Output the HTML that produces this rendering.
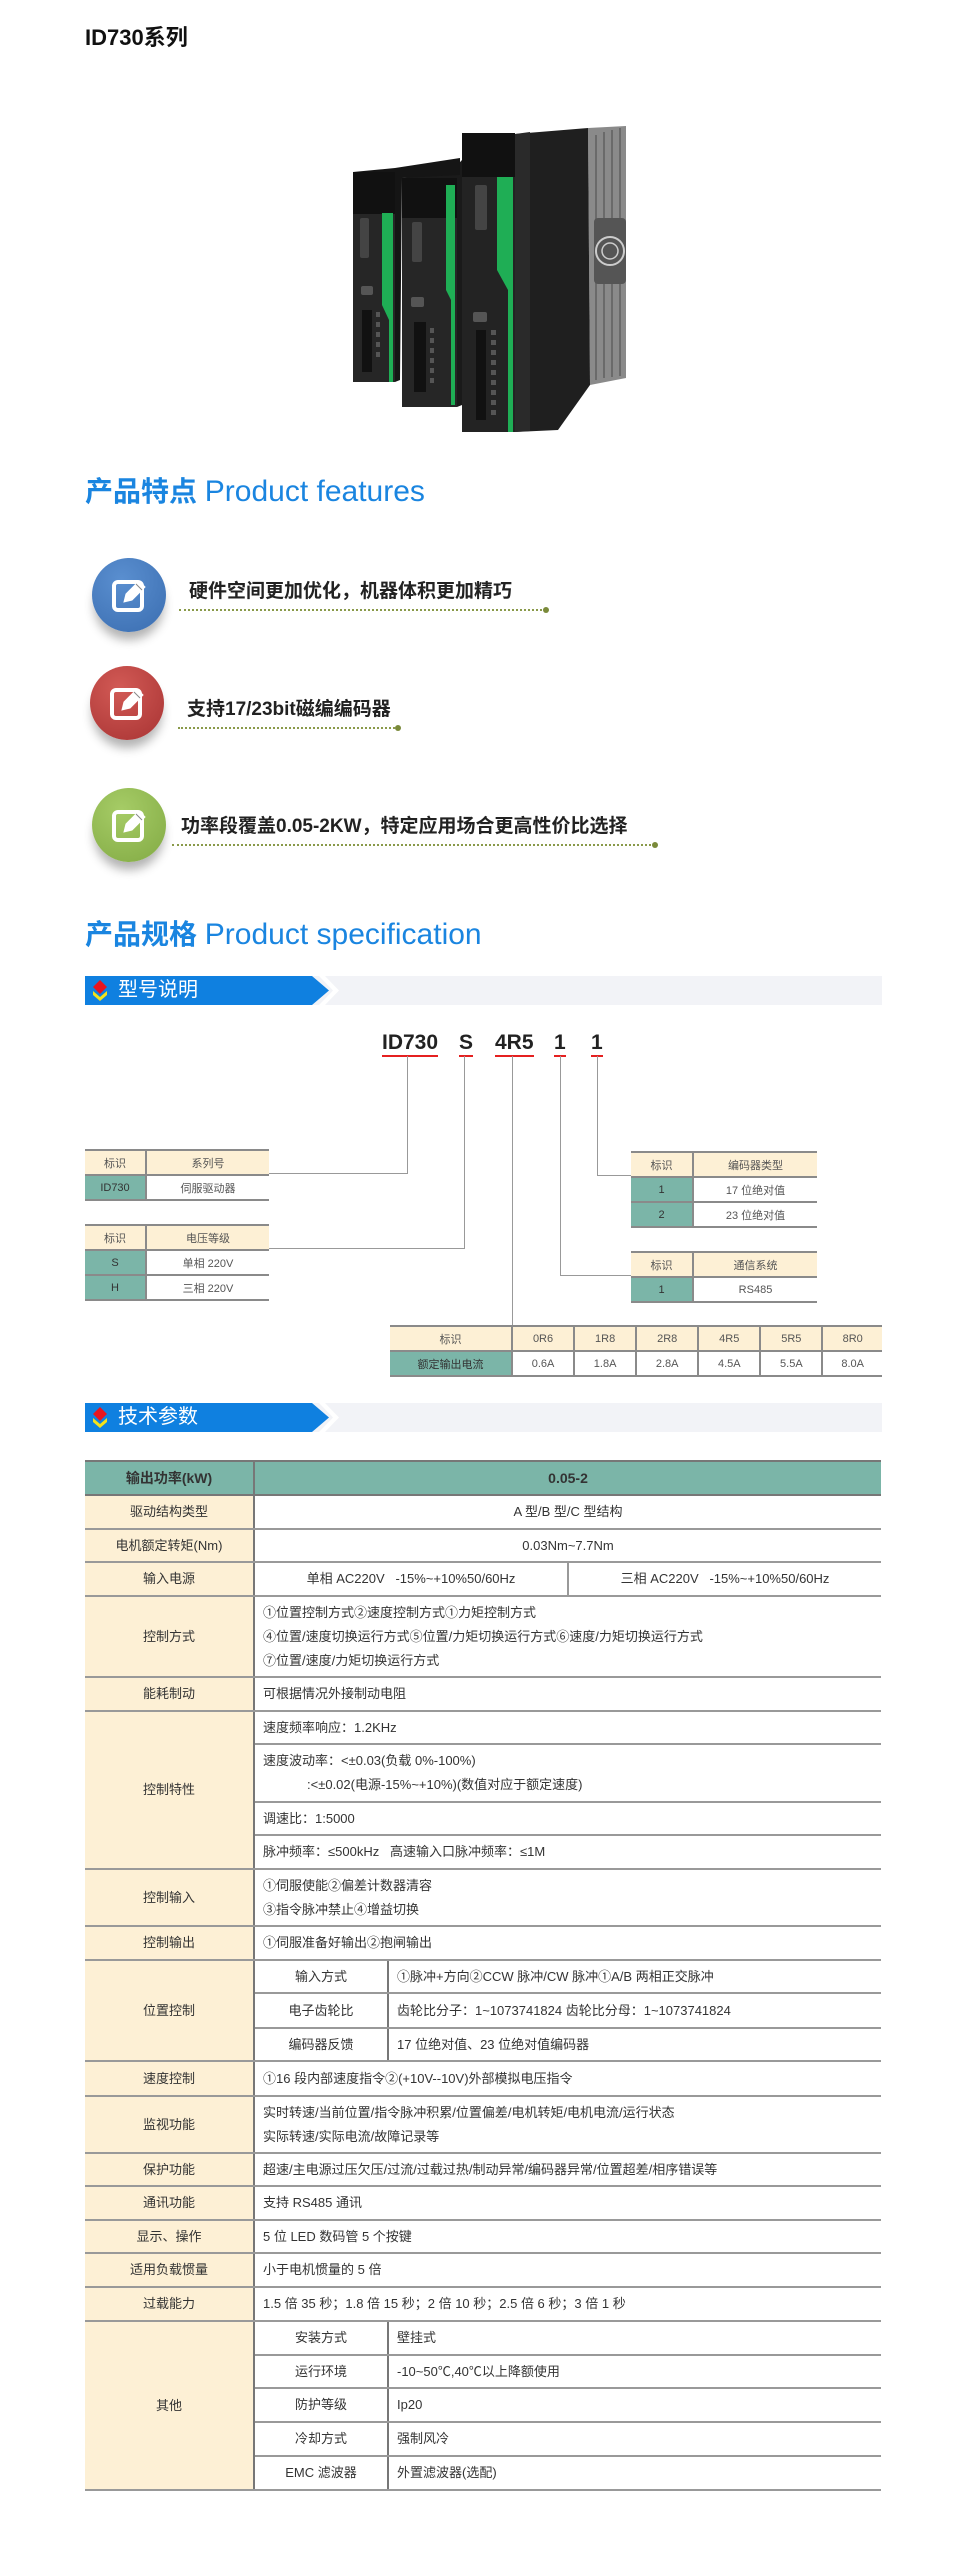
<!DOCTYPE html>
<html><head><meta charset="utf-8">
<style>
*{margin:0;padding:0;box-sizing:border-box}
body{width:960px;height:2556px;background:#fff;position:relative;font-family:"Liberation Sans","Noto Sans CJK SC",sans-serif;color:#333;overflow:hidden}
.a{position:absolute}
.h1{font-size:28px;color:#1a85e0;white-space:nowrap;line-height:1}
.h1 b{font-weight:bold}
.h1 span{font-size:30px}
.feat{font-size:19px;font-weight:bold;color:#222;white-space:nowrap;line-height:1}
.dot{border-top:2px dotted #8a9a4a;height:0}
.dot:after{content:"";position:absolute;right:-3px;top:-4px;width:6px;height:6px;border-radius:50%;background:#7a8a3a}
.circ{width:74px;height:74px;border-radius:50%;box-shadow:0 10px 10px -2px rgba(0,0,0,.3)}
.banner{left:85px;width:797px;height:29px;background:#f2f3f7}
.banner .blue{position:absolute;left:0;top:0;width:244px;height:29px;background:#0f80e0;clip-path:polygon(0 0,227px 0,244px 14.5px,227px 29px,0 29px)}
.banner .t{position:absolute;left:33px;top:3px;color:#fff;font-size:20px;line-height:23px}
.mt{border-collapse:collapse;font-size:11px;color:#555;text-align:center}
.mt td{height:25px;border-bottom:2px solid #8a8a8a;padding:0}
.mt tr:first-child td{border-top:2px solid #8a8a8a;background:#fdf0d5}
.mt td.k{background:#7bb5a8;color:#333}
.mt td+td{border-left:2px solid #8a8a8a}
.ln{background:#999}
.code{font-size:21px;font-weight:bold;color:#222;line-height:1;border-bottom:2px solid #e52020;padding-bottom:2px}
table.sp{position:absolute;left:85px;top:1460px;width:796px;border-collapse:collapse;font-size:13px;color:#333;table-layout:fixed}
.sp td{border-bottom:2px solid #999;padding:0 0 0 8px;line-height:24px;vertical-align:middle}
.sp td.l{background:#fdf0d5;text-align:center;padding:0;border-right:2px solid #777}
.sp td.c{text-align:center;padding:0}
.sp td.s{text-align:center;padding:0;border-right:2px solid #777}
.sp tr.hd td{background:#7bb5a8;font-weight:bold;border-top:2px solid #777;border-bottom:2px solid #777;font-size:14px}
</style></head><body>

<div class="a" style="left:85px;top:27px;font-size:22px;font-weight:bold;color:#111;line-height:1">ID730系列</div>

<svg class="a" style="left:350px;top:120px" width="280" height="320" viewBox="350 120 280 320">
 <path d="M588 128 L626 126 L626 378 L590 385 Z" fill="#8a8a8a"/>
 <g stroke="#6a6a6a" stroke-width="2"><line x1="596" y1="135" x2="596" y2="380"/><line x1="604" y1="132" x2="604" y2="378"/><line x1="612" y1="130" x2="612" y2="377"/><line x1="620" y1="128" x2="620" y2="376"/></g>
 <rect x="594" y="218" width="32" height="66" rx="4" fill="#555"/>
 <circle cx="610" cy="251" r="14" fill="none" stroke="#ccc" stroke-width="2"/><circle cx="610" cy="251" r="8" fill="none" stroke="#ccc" stroke-width="1.5"/>
 <path d="M515 134 L588 128 L590 385 L558 430 L515 432 Z" fill="#1f1f1f"/>
 <path d="M515 134 L530 132 L530 431 L515 432 Z" fill="#2a2a2a"/>
 <rect x="462" y="133" width="53" height="299" fill="#232323"/>
 <rect x="462" y="133" width="53" height="44" fill="#111"/>
 <path d="M497 177 L513 177 L513 432 L508 432 L508 290 L497 270 Z" fill="#1fae55"/>
 <rect x="475" y="185" width="12" height="45" rx="2" fill="#444"/>
 <rect x="473" y="312" width="14" height="10" rx="2" fill="#555"/>
 <g fill="#555"><rect x="491" y="330" width="5" height="5"/><rect x="491" y="340" width="5" height="5"/><rect x="491" y="350" width="5" height="5"/><rect x="491" y="360" width="5" height="5"/><rect x="491" y="370" width="5" height="5"/><rect x="491" y="380" width="5" height="5"/><rect x="491" y="390" width="5" height="5"/><rect x="491" y="400" width="5" height="5"/><rect x="491" y="410" width="5" height="5"/></g>
 <rect x="476" y="330" width="10" height="90" fill="#111"/>
 <path d="M402 178 L450 173 L462 160 L462 405 L457 407 Z" fill="#1a1a1a"/>
 <rect x="402" y="178" width="55" height="229" fill="#262626"/>
 <rect x="402" y="178" width="55" height="40" fill="#111"/>
 <path d="M446 185 L455 185 L455 405 L451 405 L451 300 L446 290 Z" fill="#1fae55"/>
 <rect x="412" y="222" width="10" height="40" rx="2" fill="#444"/>
 <rect x="411" y="297" width="13" height="10" rx="2" fill="#555"/>
 <rect x="414" y="322" width="12" height="70" fill="#111"/>
 <g fill="#555"><rect x="430" y="328" width="4" height="5"/><rect x="430" y="338" width="4" height="5"/><rect x="430" y="348" width="4" height="5"/><rect x="430" y="358" width="4" height="5"/><rect x="430" y="368" width="4" height="5"/><rect x="430" y="378" width="4" height="5"/></g>
 <path d="M353 172 L395 168 L460 158 L460 175 L402 178 L400 380 L395 382 Z" fill="#151515"/>
 <rect x="353" y="172" width="42" height="210" fill="#262626"/>
 <rect x="353" y="172" width="42" height="42" fill="#111"/>
 <path d="M382 213 L393 213 L393 382 L389 382 L389 320 L382 305 Z" fill="#1fae55"/>
 <rect x="360" y="218" width="9" height="40" rx="2" fill="#444"/>
 <rect x="361" y="286" width="12" height="9" rx="2" fill="#555"/>
 <rect x="362" y="310" width="10" height="62" fill="#111"/>
 <g fill="#555"><rect x="376" y="312" width="4" height="5"/><rect x="376" y="322" width="4" height="5"/><rect x="376" y="332" width="4" height="5"/><rect x="376" y="342" width="4" height="5"/><rect x="376" y="352" width="4" height="5"/></g>
</svg>

<div class="a h1" style="left:85px;top:477px"><b>产品特点</b> <span>Product features</span></div>

<svg width="0" height="0" style="position:absolute"><defs>
<g id="ic"><rect x="-15" y="-13" width="28" height="28" rx="4" fill="none" stroke="#fff" stroke-width="4"/><path d="M-5 7 L-3 -1 L10 -14 L16 -8 L3 5 Z" fill="#fff" stroke="#fff" stroke-width="1"/><path d="M7 -11 L13 -5" stroke="#888" stroke-width="1"/></g>
</defs></svg>

<div class="a circ" style="left:92px;top:558px;background:radial-gradient(circle at 40% 30%,#5a8fd0,#3a6db0)"></div>
<svg class="a" style="left:92px;top:558px" width="74" height="74" viewBox="-37 -37 74 74"><use href="#ic"/></svg>
<div class="a feat" style="left:189px;top:582px">硬件空间更加优化，机器体积更加精巧</div>
<div class="a dot" style="left:179px;top:609px;width:367px"></div>

<div class="a circ" style="left:90px;top:666px;background:radial-gradient(circle at 40% 30%,#d25a55,#a83333)"></div>
<svg class="a" style="left:90px;top:666px" width="74" height="74" viewBox="-37 -37 74 74"><use href="#ic"/></svg>
<div class="a feat" style="left:187px;top:700px">支持17/23bit磁编编码器</div>
<div class="a dot" style="left:178px;top:727px;width:220px"></div>

<div class="a circ" style="left:92px;top:788px;background:radial-gradient(circle at 40% 30%,#a6cc66,#82aa44)"></div>
<svg class="a" style="left:92px;top:788px" width="74" height="74" viewBox="-37 -37 74 74"><use href="#ic"/></svg>
<div class="a feat" style="left:181px;top:817px">功率段覆盖0.05-2KW，特定应用场合更高性价比选择</div>
<div class="a dot" style="left:172px;top:844px;width:483px"></div>

<div class="a h1" style="left:85px;top:920px"><b>产品规格</b> <span>Product specification</span></div>

<div class="a banner" style="top:976px">
 <svg class="a" style="left:226px;top:0" width="40" height="29"><path d="M8 0 L22 14.5 L8 29 L14 29 L28 14.5 L14 0Z" fill="#fff"/></svg>
 <div class="blue"></div>
 <svg class="a" style="left:6px;top:4px" width="18" height="22"><path d="M9 0 L16 7 L9 14 L2 7Z" fill="#e8141e"/><path d="M2 11 L9 17 L16 11 L16 15 L9 21 L2 15Z" fill="#f5e21a"/></svg>
 <div class="t">型号说明</div>
</div>

<div class="a code" style="left:382px;top:1032px">ID730</div>
<div class="a code" style="left:459px;top:1032px">S</div>
<div class="a code" style="left:495px;top:1032px">4R5</div>
<div class="a code" style="left:554px;top:1032px">1</div>
<div class="a code" style="left:591px;top:1032px">1</div>

<div class="a ln" style="left:407px;top:1056px;width:1px;height:118px"></div>
<div class="a ln" style="left:269px;top:1173px;width:139px;height:1px"></div>
<div class="a ln" style="left:464px;top:1056px;width:1px;height:193px"></div>
<div class="a ln" style="left:269px;top:1248px;width:196px;height:1px"></div>
<div class="a ln" style="left:512px;top:1056px;width:1px;height:270px"></div>
<div class="a ln" style="left:560px;top:1056px;width:1px;height:220px"></div>
<div class="a ln" style="left:560px;top:1275px;width:72px;height:1px"></div>
<div class="a ln" style="left:597px;top:1056px;width:1px;height:120px"></div>
<div class="a ln" style="left:597px;top:1175px;width:35px;height:1px"></div>

<table class="a mt" style="left:85px;top:1149px;width:184px"><col style="width:61px"><col>
<tr><td>标识</td><td>系列号</td></tr><tr><td class="k">ID730</td><td>伺服驱动器</td></tr></table>
<table class="a mt" style="left:85px;top:1224px;width:184px"><col style="width:61px"><col>
<tr><td>标识</td><td>电压等级</td></tr><tr><td class="k">S</td><td>单相 220V</td></tr><tr><td class="k">H</td><td>三相 220V</td></tr></table>
<table class="a mt" style="left:631px;top:1151px;width:186px"><col style="width:62px"><col>
<tr><td>标识</td><td>编码器类型</td></tr><tr><td class="k">1</td><td>17 位绝对值</td></tr><tr><td class="k">2</td><td>23 位绝对值</td></tr></table>
<table class="a mt" style="left:631px;top:1251px;width:186px"><col style="width:62px"><col>
<tr><td>标识</td><td>通信系统</td></tr><tr><td class="k">1</td><td>RS485</td></tr></table>
<table class="a mt" style="left:390px;top:1325px;width:492px"><col style="width:122px"><col><col><col><col><col><col>
<tr><td>标识</td><td>0R6</td><td>1R8</td><td>2R8</td><td>4R5</td><td>5R5</td><td>8R0</td></tr>
<tr><td class="k">额定输出电流</td><td>0.6A</td><td>1.8A</td><td>2.8A</td><td>4.5A</td><td>5.5A</td><td>8.0A</td></tr></table>

<div class="a banner" style="top:1403px">
 <svg class="a" style="left:226px;top:0" width="40" height="29"><path d="M8 0 L22 14.5 L8 29 L14 29 L28 14.5 L14 0Z" fill="#fff"/></svg>
 <div class="blue"></div>
 <svg class="a" style="left:6px;top:4px" width="18" height="22"><path d="M9 0 L16 7 L9 14 L2 7Z" fill="#e8141e"/><path d="M2 11 L9 17 L16 11 L16 15 L9 21 L2 15Z" fill="#f5e21a"/></svg>
 <div class="t">技术参数</div>
</div>

<table class="sp">
<col style="width:169px"><col style="width:134px"><col style="width:180px"><col style="width:313px">
<tr class="hd" style="height:34px"><td class="l" style="background:#7bb5a8">输出功率(kW)</td><td colspan="3" class="c">0.05-2</td></tr>
<tr style="height:34px"><td class="l">驱动结构类型</td><td colspan="3" class="c">A 型/B 型/C 型结构</td></tr>
<tr style="height:33px"><td class="l">电机额定转矩(Nm)</td><td colspan="3" class="c">0.03Nm~7.7Nm</td></tr>
<tr style="height:34px"><td class="l">输入电源</td><td colspan="2" class="c" style="border-right:2px solid #999">单相 AC220V &nbsp; -15%~+10%50/60Hz</td><td class="c">三相 AC220V &nbsp; -15%~+10%50/60Hz</td></tr>
<tr style="height:81px"><td class="l">控制方式</td><td colspan="3">①位置控制方式②速度控制方式①力矩控制方式<br>④位置/速度切换运行方式⑤位置/力矩切换运行方式⑥速度/力矩切换运行方式<br>⑦位置/速度/力矩切换运行方式</td></tr>
<tr style="height:34px"><td class="l">能耗制动</td><td colspan="3">可根据情况外接制动电阻</td></tr>
<tr style="height:33px"><td class="l" rowspan="4">控制特性</td><td colspan="3">速度频率响应：1.2KHz</td></tr>
<tr style="height:58px"><td colspan="3">速度波动率：&lt;±0.03(负载 0%-100%)<br><span style="padding-left:44px">:&lt;±0.02(电源-15%~+10%)(数值对应于额定速度)</span></td></tr>
<tr style="height:33px"><td colspan="3">调速比：1:5000</td></tr>
<tr style="height:34px"><td colspan="3">脉冲频率：≤500kHz &nbsp; 高速输入口脉冲频率：≤1M</td></tr>
<tr style="height:57px"><td class="l">控制输入</td><td colspan="3">①伺服使能②偏差计数器清容<br>③指令脉冲禁止④增益切换</td></tr>
<tr style="height:34px"><td class="l">控制输出</td><td colspan="3">①伺服准备好输出②抱闸输出</td></tr>
<tr style="height:33px"><td class="l" rowspan="3">位置控制</td><td class="s">输入方式</td><td colspan="2">①脉冲+方向②CCW 脉冲/CW 脉冲①A/B 两相正交脉冲</td></tr>
<tr style="height:35px"><td class="s">电子齿轮比</td><td colspan="2">齿轮比分子：1~1073741824 齿轮比分母：1~1073741824</td></tr>
<tr style="height:33px"><td class="s">编码器反馈</td><td colspan="2">17 位绝对值、23 位绝对值编码器</td></tr>
<tr style="height:35px"><td class="l">速度控制</td><td colspan="3">①16 段内部速度指令②(+10V--10V)外部模拟电压指令</td></tr>
<tr style="height:57px"><td class="l">监视功能</td><td colspan="3">实时转速/当前位置/指令脉冲积累/位置偏差/电机转矩/电机电流/运行状态<br>实际转速/实际电流/故障记录等</td></tr>
<tr style="height:33px"><td class="l">保护功能</td><td colspan="3">超速/主电源过压欠压/过流/过载过热/制动异常/编码器异常/位置超差/相序错误等</td></tr>
<tr style="height:34px"><td class="l">通讯功能</td><td colspan="3">支持 RS485 通讯</td></tr>
<tr style="height:33px"><td class="l">显示、操作</td><td colspan="3">5 位 LED 数码管 5 个按键</td></tr>
<tr style="height:34px"><td class="l">适用负载惯量</td><td colspan="3">小于电机惯量的 5 倍</td></tr>
<tr style="height:34px"><td class="l">过载能力</td><td colspan="3">1.5 倍 35 秒；1.8 倍 15 秒；2 倍 10 秒；2.5 倍 6 秒；3 倍 1 秒</td></tr>
<tr style="height:34px"><td class="l" rowspan="5">其他</td><td class="s">安装方式</td><td colspan="2">壁挂式</td></tr>
<tr style="height:33px"><td class="s">运行环境</td><td colspan="2">-10~50℃,40℃以上降额使用</td></tr>
<tr style="height:34px"><td class="s">防护等级</td><td colspan="2">Ip20</td></tr>
<tr style="height:34px"><td class="s">冷却方式</td><td colspan="2">强制风冷</td></tr>
<tr style="height:34px"><td class="s">EMC 滤波器</td><td colspan="2">外置滤波器(选配)</td></tr>
</table>
</body></html>
